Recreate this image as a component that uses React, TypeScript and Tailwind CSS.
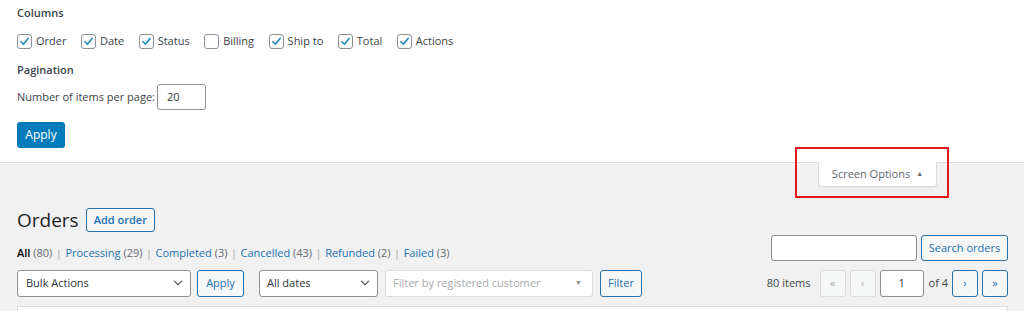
import React from "react";

const F = { fontFamily: '"Open Sans", "Noto Sans", sans-serif' };

function Check({ checked, label }: { checked: boolean; label: string }) {
  return (
    <label className="flex items-center gap-[4px] mr-[14.5px]">
      <span className="w-[15px] h-[15px] rounded-[3px] border border-[#8c8f94] bg-white flex items-center justify-center">
        {checked && (
          <svg width="11" height="11" viewBox="0 0 20 20">
            <path d="M3.5 10.5 L8 15 L16.5 4.5" fill="none" stroke="#1e8cbe" strokeWidth="3" strokeLinecap="round" strokeLinejoin="round" />
          </svg>
        )}
      </span>
      <span className="text-[#3c434a]">{label}</span>
    </label>
  );
}

function Chevron() {
  return (
    <svg width="12" height="12" viewBox="0 0 20 20">
      <path d="M4 7 L10 13 L16 7" fill="none" stroke="#555" strokeWidth="2" strokeLinecap="round" strokeLinejoin="round" />
    </svg>
  );
}

function Sep() {
  return <span className="text-[#a7aaad] mx-[3.5px]">|</span>;
}

export default function App() {
  return (
    <div className="w-[1024px] h-[311px] overflow-hidden bg-[#f1f1f1] text-[11px] text-[#3c434a] relative" style={F}>
      {/* Screen options panel */}
      <div className="bg-white border-b border-[#dcdcde] h-[163px] px-[17px]">
        <div className="pt-[4px] leading-[18px] font-semibold text-[#3c434a]">Columns</div>
        <div className="mt-[11px] h-[16px] flex items-center">
          <Check checked label="Order" />
          <Check checked label="Date" />
          <Check checked label="Status" />
          <Check checked={false} label="Billing" />
          <Check checked label="Ship to" />
          <Check checked label="Total" />
          <Check checked label="Actions" />
        </div>
        <div className="mt-[12px] leading-[18px] font-semibold">Pagination</div>
        <div className="mt-[5px] flex items-center gap-[2px]">
          <span>Number of items per page:</span>
          <div className="w-[49px] h-[26px] border border-[#8c8f94] rounded-[3px] bg-white flex items-center pl-[9px] text-[#2c3338]">20</div>
        </div>
        <button className="mt-[12px] h-[26px] w-[48px] rounded-[3px] bg-[#007cba] text-white text-[12px] flex items-center justify-center">
          Apply
        </button>
      </div>

      {/* Screen options tab */}
      <div className="absolute left-[818px] top-[162px] w-[119px] h-[25px] bg-white border border-t-0 border-[#dcdcde] rounded-b-[3px] shadow-[0_1px_1px_rgba(0,0,0,0.04)] flex items-center justify-center gap-[6px] text-[#646970]">
        <span>Screen Options</span>
        <span className="text-[7px]">▲</span>
      </div>
      <div className="absolute left-[795px] top-[147px] w-[154px] h-[51px] border-2 border-[#e0171b] pointer-events-none" />

      {/* Main */}
      <div className="pr-[16px] pl-[17px]">
        <div className="mt-[45px] h-[24px] flex items-center gap-[7px]">
          <h1 className="text-[19px] leading-[24px] text-[#1d2327] font-normal">Orders</h1>
          <button className="h-[24px] px-[7px] border border-[#2271b1] rounded-[3px] bg-[#f6f7f7] text-[#2271b1] font-semibold text-[11px]">
            Add order
          </button>
        </div>
        <div className="mt-[3px] h-[26px] flex items-end justify-between">
          <div className="leading-[18px] text-[#646970] translate-y-[1px]">
            <span className="text-[#000] font-semibold">All</span> (80)
            <Sep />
            <span className="text-[#2271b1]">Processing</span> (29)
            <Sep />
            <span className="text-[#2271b1]">Completed</span> (3)
            <Sep />
            <span className="text-[#2271b1]">Cancelled</span> (43)
            <Sep />
            <span className="text-[#2271b1]">Refunded</span> (2)
            <Sep />
            <span className="text-[#2271b1]">Failed</span> (3)
          </div>
          <div className="flex items-center gap-[4px] self-start">
            <div className="w-[146px] h-[26px] border border-[#8c8f94] rounded-[3px] bg-white" />
            <button className="h-[26px] w-[87px] border border-[#2271b1] rounded-[3px] bg-[#f6f7f7] text-[#2271b1] text-[11px]">
              Search orders
            </button>
          </div>
        </div>
        <div className="mt-[8px] h-[28px] flex items-center justify-between">
          <div className="flex items-center h-full">
            <div className="w-[174px] h-[27px] border border-[#8c8f94] rounded-[3px] bg-white flex items-center justify-between pl-[8px] pr-[6px] text-[#2c3338]">
              <span>Bulk Actions</span>
              <Chevron />
            </div>
            <button className="ml-[6px] w-[47px] h-[27px] border border-[#2271b1] rounded-[3px] bg-[#f6f7f7] text-[#2271b1]">Apply</button>
            <div className="ml-[15px] w-[119px] h-[27px] border border-[#8c8f94] rounded-[3px] bg-white flex items-center justify-between pl-[7px] pr-[6px] text-[#2c3338]">
              <span>All dates</span>
              <Chevron />
            </div>
            <div className="ml-[7px] w-[208px] h-[27px] border border-[#dcdcde] rounded-[3px] bg-white flex items-center justify-between pl-[7px] pr-[10px] text-[#a7aaad]">
              <span>Filter by registered customer</span>
              <span className="text-[7px] text-[#888]">▼</span>
            </div>
            <button className="ml-[7px] w-[42px] h-[27px] border border-[#2271b1] rounded-[3px] bg-[#f6f7f7] text-[#2271b1]">Filter</button>
          </div>
          <div className="flex items-center h-full">
            <span className="mr-[9px] text-[#3c434a]">80 items</span>
            <div className="w-[26px] h-[27px] border border-[#dcdcde] rounded-[3px] bg-[#f6f7f7] flex items-center justify-center text-[#a7aaad]">«</div>
            <div className="ml-[4px] w-[26px] h-[27px] border border-[#dcdcde] rounded-[3px] bg-[#f6f7f7] flex items-center justify-center text-[#a7aaad]">‹</div>
            <div className="ml-[4px] w-[44px] h-[27px] border border-[#8c8f94] rounded-[3px] bg-white flex items-center justify-center text-[#2c3338]">1</div>
            <span className="ml-[5px] mr-[4px]">of 4</span>
            <div className="w-[26px] h-[27px] border border-[#2271b1] rounded-[3px] bg-[#f6f7f7] flex items-center justify-center text-[#2271b1]">›</div>
            <div className="ml-[4px] w-[26px] h-[27px] border border-[#2271b1] rounded-[3px] bg-[#f6f7f7] flex items-center justify-center text-[#2271b1]">»</div>
          </div>
        </div>
        <div className="mt-[9px] h-[20px] bg-white border border-[#dcdcde]" />
      </div>
    </div>
  );
}
